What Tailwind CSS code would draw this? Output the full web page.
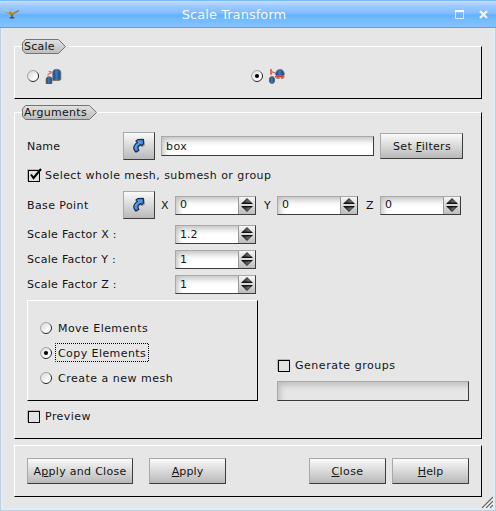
<!DOCTYPE html>
<html lang="en">
<head>
<meta charset="utf-8">
<title>Scale Transform</title>
<script src="https://cdn.jsdelivr.net/npm/@tailwindcss/browser@4"></script>
</head>
<body class="w-[496px] h-[511px] overflow-hidden bg-[#e6e6e6] font-['DejaVu_Sans',sans-serif] text-[11px] leading-[14px] text-[#141414]">
<svg class="absolute w-0 h-0">
  <defs>
    <linearGradient id="gBlue" x1="0" y1="0" x2="1" y2="0"><stop offset="0" stop-color="#1c3f6b"/><stop offset=".45" stop-color="#3b78bd"/><stop offset="1" stop-color="#1b4474"/></linearGradient>
    <linearGradient id="gArrow" x1="0" y1="0" x2="1" y2="1"><stop offset="0" stop-color="#7ab8fa"/><stop offset="1" stop-color="#1c6ad0"/></linearGradient>
    <linearGradient id="gTri" x1="0" y1="0" x2="1" y2="0"><stop offset="0" stop-color="#222"/><stop offset="1" stop-color="#8c8c8c"/></linearGradient>
    <linearGradient id="gTag" x1="0" y1="0" x2="0" y2="1"><stop offset="0" stop-color="#e2e2e2"/><stop offset="1" stop-color="#bcbcbc"/></linearGradient>
    <linearGradient id="gRad" x1="0" y1="0" x2="1" y2="1"><stop offset="0" stop-color="#d2d2d2"/><stop offset=".7" stop-color="#fff"/></linearGradient>
    <linearGradient id="gRing" x1="0" y1="0" x2="1" y2="1"><stop offset=".35" stop-color="#a5a5a5"/><stop offset=".65" stop-color="#222"/></linearGradient>
    <symbol id="radio" viewBox="0 0 12 12"><circle cx="6" cy="6" r="5.5" fill="url(#gRad)" stroke="url(#gRing)"/></symbol>
    <symbol id="radioOn" viewBox="0 0 12 12"><circle cx="6" cy="6" r="5.5" fill="url(#gRad)" stroke="url(#gRing)"/><circle cx="6" cy="6" r="2.1" fill="#000"/></symbol>
    <symbol id="spin" viewBox="0 0 18 19"><path d="M9 2.500 13.500 7H4.500Z" fill="url(#gTri)" stroke="#111" stroke-width=".8"/><path d="M3.500 7.500h11M3.500 10.500h11" stroke="#111"/><path d="M9 15.500 13.500 11H4.500Z" fill="url(#gTri)" stroke="#111" stroke-width=".8"/></symbol>
    <symbol id="arrow" viewBox="0 0 16 18"><path d="M5.500 16C2 13 2.500 8.500 6.500 6.500L5.500 4l8-1 .5 5.500-3 2-1-1.500C7 10 7 11.500 8.500 14Z" fill="#777" opacity=".55"/><path d="M4.800 15C2.200 12.300 2.200 10.500 3.600 8.300 4.300 7 5.500 6 6.500 5.500L5 4 7 2.600 12.300 2.300 12.600 6.800 10.800 8.600 9.800 7.600C7.200 8.800 5.800 10 7.800 13.200Z" fill="url(#gArrow)" stroke="#142c50" stroke-width="1.200" stroke-linejoin="round"/></symbol>
  </defs>
</svg>

<div class="relative flex flex-col w-[496px] h-[511px]">
  <!-- Title bar -->
  <header class="flex items-center h-[28px] shrink-0 border-t border-b border-t-[#7dbdff] border-b-[#5f9fe6] bg-[linear-gradient(180deg,#c4dfff_0px,#9dcaff_5px,#82bdff_12px,#66b1ff_14px,#74bbff_19px,#85c3ff_26px)]">
    <svg class="w-4 h-[10px] ml-1" viewBox="0 0 16 10"><path d="M0 1 5 3Q8 1.500 10.500 3L15.800.8Q14 4 10 5L8.800 6.200H7.200L5.500 5Q2 3.800 0 1Z" fill="#a9832f"/><path d="M.5 1.300 5 3.300M7 3h3" stroke="#ead596" stroke-width=".9"/><path d="M10.500 4 15 1.500" stroke="#5e7480" stroke-width=".8"/><path d="M8 6v2.500M5.800 8.800h4.500" stroke="#57441d" stroke-width="1.300"/></svg>
    <h1 class="w-[426px] ml-px text-center text-[13px] leading-[16px] tracking-[0.05px] text-white/95 mt-px">Scale Transform</h1>
    <svg class="w-[9px] h-[9px] ml-[8px] mt-px" viewBox="0 0 9 9"><path d="M0 1h9" stroke="#fff" stroke-width="2"/><path d="M.5 2v6.500h8V2" fill="none" stroke="#e2e8ee"/></svg>
    <svg class="w-[9px] h-[9px] ml-[15px] mt-px" viewBox="0 0 9 9"><path d="M1 1l7 7M8 1 1 8" stroke="#f1f4f7" stroke-width="2.300"/></svg>
  </header>

  <main class="flex flex-col grow border-x border-b border-[#bfcfe0]">
   <div class="flex flex-col grow border-x-2 border-b-2 border-[#e3ebf2] pl-[11px] pt-[18px]">

    <!-- Scale -->
    <section class="relative flex items-center w-[468px] h-[53px] border border-t-white border-l-white border-r-black border-b-black pl-3 pt-[7px]">
      <div class="absolute left-[7px] -top-[8px] w-[44px] h-[15px]">
        <svg class="absolute inset-0" width="44" height="15"><path d="M3.500.5H36.500L43.500 7.500 36.500 14.500H3.500L.5 11V4Z" fill="url(#gTag)" stroke="#747474"/></svg>
        <span class="relative block pl-[2px] pt-px tracking-[0.25px]">Scale</span>
      </div>
      <svg class="w-3 h-3"><use href="#radio"/></svg>
      <svg class="w-[18px] h-[17px] ml-[6px]" viewBox="0 0 18 17"><path d="M7.800 4Q8 1.300 11.800 1.300 15.700 1.300 15.800 4.500V11.500L14 12.500H7.800Z" fill="url(#gBlue)" stroke="#77706b" stroke-width=".9"/><path d="M1.200 11Q1.500 8.800 4 8.800 6.800 8.800 6.800 11V15.500H1.200Z" fill="url(#gBlue)" stroke="#55504c" stroke-width=".9"/><path d="M2.500 7.500 6 4M3.500 3.500H6V6" stroke="#dc6260" stroke-opacity=".85" stroke-width="1.200" fill="none"/></svg>
      <svg class="w-3 h-3 ml-[188px]"><use href="#radioOn"/></svg>
      <svg class="w-[18px] h-[17px] ml-[5px]" viewBox="0 0 18 17"><path d="M7.500 6.500Q8 1.500 12 1.500 16 1.500 16.300 6.500L15.500 7.500H8.500Z" fill="url(#gBlue)" stroke="#77706b" stroke-width=".9"/><path d="M7 8.600h9.500" stroke="#d23f3b" stroke-width="1.600"/><path d="M8.500 10.200h3M13 10.200h2.500" stroke="#8a5553" stroke-width="1.300"/><path d="M3 1v5.800" stroke="#df5c58" stroke-width="1.800"/><path d="M3.500 3.600 7 5" stroke="#df5c58" stroke-width="1.300"/><ellipse cx="4" cy="12" rx="2.700" ry="3.500" fill="url(#gBlue)" stroke="#5c5652" stroke-width=".8"/></svg>
    </section>

    <!-- Arguments -->
    <section class="relative w-[468px] h-[327px] mt-[13px] border border-t-white border-l-white border-r-black border-b-black pl-3 pt-[19px]">
      <div class="absolute left-[7px] -top-[8px] w-[75px] h-[15px]">
        <svg class="absolute inset-0" width="75" height="15"><path d="M3.500.5H67.500L74.500 7.500 67.500 14.500H3.500L.5 11V4Z" fill="url(#gTag)" stroke="#747474"/></svg>
        <span class="relative block pl-[2px] pt-px tracking-[0.3px]">Arguments</span>
      </div>

      <div class="flex items-center h-[28px]">
        <label class="w-[96px] pt-[2px] tracking-[0.2px]">Name</label>
        <button class="flex items-center justify-center w-8 h-7 border border-t-[#a9a9a9] border-l-[#a9a9a9] border-r-[#3c3c3c] border-b-[#3c3c3c] bg-linear-to-b from-[#fafafa] to-[#b9b9b9]"><svg class="w-4 h-[18px]"><use href="#arrow"/></svg></button>
        <div class="w-[213px] h-5 ml-[6px] pl-1 pt-[3px] border border-t-[#a9a9a9] border-l-[#a9a9a9] border-r-[#3c3c3c] border-b-[#3c3c3c] bg-white shadow-[inset_4px_5px_6px_-2px_#c0c0c0] tracking-[0.5px]">box</div>
        <button class="w-[83px] h-[26px] ml-[6px] pt-[2px] pl-px border border-t-[#a9a9a9] border-l-[#a9a9a9] border-r-[#3c3c3c] border-b-[#3c3c3c] bg-linear-to-b from-[#fafafa] to-[#b9b9b9] tracking-[0.3px]">Set <u>F</u>ilters</button>
      </div>

      <div class="flex items-center h-[14px] mt-2">
        <svg class="w-[15px] h-[15px]" viewBox="0 0 15 15"><path d="M.5 13V1.500H13" fill="none" stroke="#b8b8b8"/><rect x="1.500" y="2.500" width="11" height="11" fill="#e2e2e2" stroke="#000"/><path d="M4 6.500 6.500 10 14 1" fill="none" stroke="#000" stroke-width="2"/></svg>
        <span class="ml-[3px] pt-[2px] tracking-[0.45px]">Select whole mesh, submesh or group</span>
      </div>

      <div class="flex items-center h-7 mt-[9px]">
        <label class="w-[96px] pt-[2px] tracking-[0.4px]">Base Point</label>
        <button class="flex items-center justify-center w-8 h-7 border border-t-[#a9a9a9] border-l-[#a9a9a9] border-r-[#3c3c3c] border-b-[#3c3c3c] bg-linear-to-b from-[#fafafa] to-[#b9b9b9]"><svg class="w-4 h-[18px]"><use href="#arrow"/></svg></button>
        <label class="w-[14px] ml-[6px] pt-[2px]">X</label>
        <div class="flex w-[81px] h-[19px] border border-t-[#a9a9a9] border-l-[#a9a9a9] border-r-[#3c3c3c] border-b-[#3c3c3c]"><span class="w-[62px] pl-1 pt-px bg-white shadow-[inset_4px_5px_6px_-2px_#c0c0c0]">0</span><span class="w-[17px] border-l border-[#999] bg-linear-to-b from-[#f6f6f6] to-[#bdbdbd]"><svg class="w-[18px] h-[19px] -ml-px -mt-px"><use href="#spin"/></svg></span></div>
        <label class="w-[13px] ml-2 pt-[2px]">Y</label>
        <div class="flex w-[81px] h-[19px] border border-t-[#a9a9a9] border-l-[#a9a9a9] border-r-[#3c3c3c] border-b-[#3c3c3c]"><span class="w-[62px] pl-1 pt-px bg-white shadow-[inset_4px_5px_6px_-2px_#c0c0c0]">0</span><span class="w-[17px] border-l border-[#999] bg-linear-to-b from-[#f6f6f6] to-[#bdbdbd]"><svg class="w-[18px] h-[19px] -ml-px -mt-px"><use href="#spin"/></svg></span></div>
        <label class="w-[14px] ml-2 pt-[2px]">Z</label>
        <div class="flex w-[81px] h-[19px] border border-t-[#a9a9a9] border-l-[#a9a9a9] border-r-[#3c3c3c] border-b-[#3c3c3c]"><span class="w-[62px] pl-1 pt-px bg-white shadow-[inset_4px_5px_6px_-2px_#c0c0c0]">0</span><span class="w-[17px] border-l border-[#999] bg-linear-to-b from-[#f6f6f6] to-[#bdbdbd]"><svg class="w-[18px] h-[19px] -ml-px -mt-px"><use href="#spin"/></svg></span></div>
      </div>

      <div class="flex flex-col gap-[6px] mt-[6px]">
        <div class="flex items-center h-[19px]"><label class="w-[148px] tracking-[0.3px]">Scale Factor X :</label>
        <div class="flex w-[81px] h-[19px] border border-t-[#a9a9a9] border-l-[#a9a9a9] border-r-[#3c3c3c] border-b-[#3c3c3c]"><span class="w-[62px] pl-1 pt-[2px] bg-white shadow-[inset_4px_5px_6px_-2px_#c0c0c0]">1.2</span><span class="w-[17px] border-l border-[#999] bg-linear-to-b from-[#f6f6f6] to-[#bdbdbd]"><svg class="w-[18px] h-[19px] -ml-px -mt-px"><use href="#spin"/></svg></span></div></div>
        <div class="flex items-center h-[19px]"><label class="w-[148px] tracking-[0.3px]">Scale Factor Y :</label>
        <div class="flex w-[81px] h-[19px] border border-t-[#a9a9a9] border-l-[#a9a9a9] border-r-[#3c3c3c] border-b-[#3c3c3c]"><span class="w-[62px] pl-1 pt-[2px] bg-white shadow-[inset_4px_5px_6px_-2px_#c0c0c0]">1</span><span class="w-[17px] border-l border-[#999] bg-linear-to-b from-[#f6f6f6] to-[#bdbdbd]"><svg class="w-[18px] h-[19px] -ml-px -mt-px"><use href="#spin"/></svg></span></div></div>
        <div class="flex items-center h-[19px]"><label class="w-[148px] tracking-[0.3px]">Scale Factor Z :</label>
        <div class="flex w-[81px] h-[19px] border border-t-[#a9a9a9] border-l-[#a9a9a9] border-r-[#3c3c3c] border-b-[#3c3c3c]"><span class="w-[62px] pl-1 pt-[2px] bg-white shadow-[inset_4px_5px_6px_-2px_#c0c0c0]">1</span><span class="w-[17px] border-l border-[#999] bg-linear-to-b from-[#f6f6f6] to-[#bdbdbd]"><svg class="w-[18px] h-[19px] -ml-px -mt-px"><use href="#spin"/></svg></span></div></div>
      </div>

      <div class="flex mt-[6px]">
        <div class="flex flex-col gap-[6px] w-[231px] h-[101px] pl-3 pt-[17px] border border-t-white border-l-white border-r-black border-b-black">
          <div class="flex items-center h-[19px] tracking-[0.45px]"><svg class="w-3 h-3"><use href="#radio"/></svg><span class="ml-[6px] pt-[2px]">Move Elements</span></div>
          <div class="flex items-center h-[19px] tracking-[0.43px]"><svg class="w-3 h-3"><use href="#radioOn"/></svg><span class="relative ml-[3px] pl-[3px] w-[94px] h-[19px] leading-[21px]"><svg class="absolute left-0 top-0 w-[94px] h-[19px]"><rect x=".5" y=".5" width="93" height="18" fill="none" stroke="#000" stroke-dasharray="1 1" stroke-dashoffset=".5"/></svg>Copy Elements</span></div>
          <div class="flex items-center h-[19px] tracking-[0.5px]"><svg class="w-3 h-3"><use href="#radio"/></svg><span class="ml-[6px] pt-[2px]">Create a new mesh</span></div>
        </div>
        <div class="w-[192px] ml-[19px] pt-[58px]">
          <div class="flex items-center h-[15px]"><svg class="w-[15px] h-[15px]" viewBox="0 0 15 15"><path d="M.5 13V1.500H13" fill="none" stroke="#b8b8b8"/><rect x="1.500" y="2.500" width="11" height="11" fill="#e2e2e2" stroke="#000"/></svg><span class="ml-[3px] tracking-[0.53px]">Generate groups</span></div>
          <div class="h-5 mt-2 border border-t-[#a9a9a9] border-l-[#a9a9a9] border-r-[#3c3c3c] border-b-[#3c3c3c] shadow-[inset_4px_5px_6px_-2px_#bcbcbc]"></div>
        </div>
      </div>

      <div class="flex items-center h-[15px] mt-2"><svg class="w-[15px] h-[15px]" viewBox="0 0 15 15"><path d="M.5 13V1.500H13" fill="none" stroke="#b8b8b8"/><rect x="1.500" y="2.500" width="11" height="11" fill="#e2e2e2" stroke="#000"/></svg><span class="ml-[3px] tracking-[0.45px]">Preview</span></div>
    </section>

    <!-- Dialog buttons -->
    <section class="flex items-center w-[468px] h-[52px] mt-[6px] pl-3 border border-t-white border-l-white border-r-black border-b-black">
      <button class="w-[106px] h-[26px] pt-[2px] border border-t-[#a9a9a9] border-l-[#a9a9a9] border-r-[#3c3c3c] border-b-[#3c3c3c] bg-linear-to-b from-[#fafafa] to-[#b9b9b9] tracking-[0.3px]">A<u>p</u>ply and Close</button>
      <button class="w-[77px] h-[26px] ml-4 pt-[2px] border border-t-[#a9a9a9] border-l-[#a9a9a9] border-r-[#3c3c3c] border-b-[#3c3c3c] bg-linear-to-b from-[#fafafa] to-[#b9b9b9] tracking-[0.1px]"><u>A</u>pply</button>
      <button class="w-[77px] h-[26px] ml-[83px] pt-[2px] border border-t-[#a9a9a9] border-l-[#a9a9a9] border-r-[#3c3c3c] border-b-[#3c3c3c] bg-linear-to-b from-[#fafafa] to-[#b9b9b9] tracking-[0.4px]"><u>C</u>lose</button>
      <button class="w-[77px] h-[26px] ml-[6px] pt-[2px] border border-t-[#a9a9a9] border-l-[#a9a9a9] border-r-[#3c3c3c] border-b-[#3c3c3c] bg-linear-to-b from-[#fafafa] to-[#b9b9b9] tracking-[0.1px]"><u>H</u>elp</button>
    </section>
   </div>
  </main>

  <!-- Resize grip -->
  <svg class="absolute right-[3px] bottom-[3px] w-3 h-3" viewBox="0 0 12 12"><path d="M0 12 12 0V12Z" fill="#fafafa"/><path d="M1 12 12 1M5 12l7-7M9 12l3-3" stroke="#666" stroke-width="1.300"/></svg>
</div>
</body>
</html>
